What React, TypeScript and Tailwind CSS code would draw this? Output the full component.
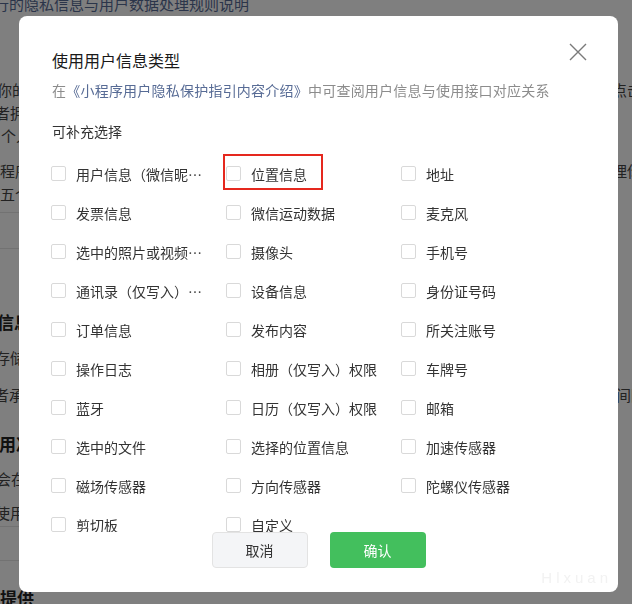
import { X } from "lucide-react";

const ITEMS: string[] = [
  "用户信息（微信昵称、头像）",
  "位置信息",
  "地址",
  "发票信息",
  "微信运动数据",
  "麦克风",
  "选中的照片或视频信息",
  "摄像头",
  "手机号",
  "通讯录（仅写入）权限",
  "设备信息",
  "身份证号码",
  "订单信息",
  "发布内容",
  "所关注账号",
  "操作日志",
  "相册（仅写入）权限",
  "车牌号",
  "蓝牙",
  "日历（仅写入）权限",
  "邮箱",
  "选中的文件",
  "选择的位置信息",
  "加速传感器",
  "磁场传感器",
  "方向传感器",
  "陀螺仪传感器",
  "剪切板",
  "自定义",
];

const font = "font-['Noto_Sans_CJK_SC','Noto_Sans',sans-serif]";

function BackgroundPage() {
  return (
    <div className={`h-screen w-full overflow-hidden bg-white text-[15px] text-[#444] ${font}`}>
      <div className="mt-[-7px] ml-[-6px] h-[22px] leading-[22px] text-[#576b95]">
        行的隐私信息与用户数据处理规则说明
      </div>
      <div className="mt-[64px] flex h-[22px] justify-between leading-[22px]">
        <span className="ml-[-3px] whitespace-nowrap">你的小程序如何处理用户信息</span>
        <span className="mr-[-10px] whitespace-nowrap">点击</span>
      </div>
      <div className="mt-[1px] ml-[-5px] h-[22px] whitespace-nowrap leading-[22px]">者拥有的个人信息</div>
      <div className="mt-[1px] ml-[1px] h-[22px] whitespace-nowrap leading-[22px]">个人信息保护说明</div>
      <div className="mt-[13px] flex h-[22px] justify-between leading-[22px]">
        <span className="whitespace-nowrap">程序开发者将处理</span>
        <span className="mr-[-10px] whitespace-nowrap">理你</span>
      </div>
      <div className="mt-[1px] h-[22px] whitespace-nowrap leading-[22px]">五个工作日内</div>
      <div className="mt-[7px] h-px w-[300px] bg-[#e5e5e5]" />
      <div className="mt-[35px] h-px w-[300px] bg-[#e5e5e5]" />
      <div className="mt-[61px] ml-[-3px] h-[24px] whitespace-nowrap text-[17px] font-bold leading-[24px] text-[#222]">
        信息的存储
      </div>
      <div className="mt-[13px] ml-[-5px] h-[22px] whitespace-nowrap leading-[22px]">存储地点</div>
      <div className="mt-[15px] flex h-[22px] justify-between leading-[22px]">
        <span className="ml-[-6px] whitespace-nowrap">者承诺存储期限</span>
        <span className="mr-[-14px] whitespace-nowrap">间隔</span>
      </div>
      <div className="mt-[26px] ml-[-1px] h-[24px] whitespace-nowrap text-[17px] font-bold leading-[24px] text-[#222]">
        用决定权
      </div>
      <div className="mt-[12px] ml-[-4px] h-[22px] whitespace-nowrap leading-[22px]">会在用户同意后</div>
      <div className="mt-[12px] ml-[-5px] h-[22px] whitespace-nowrap leading-[22px]">使用范围</div>
      <div className="mt-[2px] h-px w-[300px] bg-[#e5e5e5]" />
      <div className="mt-[33px] h-px w-[300px] bg-[#e5e5e5]" />
      <div className="mt-[25px] h-[24px] whitespace-nowrap text-[17px] font-bold leading-[24px] text-[#222]">
        提供
      </div>
    </div>
  );
}

function Item({ label, marked }: { label: string; marked?: boolean }) {
  return (
    <div className="relative flex items-center gap-[10px]">
      <span className="h-[15px] w-[15px] shrink-0 rounded-[2px] border border-[#d9d9d9] bg-white" />
      <span className="max-w-[128px] truncate text-[14px] leading-[20px] text-[#333]">{label}</span>
      {marked && (
        <span className="absolute left-[-3px] top-0 h-[36px] w-[100px] border-2 border-[#e5281e]" />
      )}
    </div>
  );
}

export default function App() {
  return (
    <div className="relative">
      <BackgroundPage />
      <div className={`fixed inset-0 bg-black/50 pl-[19px] pt-[16px] ${font}`}>
        <div className="relative flex h-[576px] w-[599px] flex-col rounded-lg bg-white">
          {/* Header */}
          <div className="flex items-start justify-between pl-[33px] pr-[31px] pt-[32px]">
            <h2 className="text-[16px] leading-[24px] text-[#1a1a1a]">使用用户信息类型</h2>
            <button className="mt-[-5px] text-[#7a7a7a]">
              <svg width="18" height="18" viewBox="0 0 18 18" fill="none" stroke="currentColor" strokeWidth="1.4">
                <path d="M1 1L17 17M17 1L1 17" />
              </svg>
            </button>
          </div>
          <p className="mt-[8px] pl-[33px] text-[14px] leading-[20px] tracking-[0.22px] text-[#8c8c8c]">
            在<span className="text-[#576b95]">《小程序用户隐私保护指引内容介绍》</span>中可查阅用户信息与使用接口对应关系
          </p>
          <p className="mt-[21px] pl-[33px] text-[14px] leading-[20px] text-[#333]">可补充选择</p>

          {/* Options */}
          <div className="mt-[13px] min-h-0 flex-1 overflow-hidden pl-[32px]">
            <div className="grid auto-rows-[39px] grid-cols-[175px_175px_175px]">
              {ITEMS.map((label) => (
                <Item key={label} label={label} marked={label === "位置信息"} />
              ))}
            </div>
          </div>

          {/* Footer */}
          <div className="flex justify-center gap-[22px] pb-[24px]">
            <button className="h-[36px] w-[96px] rounded-[4px] border border-[#e3e3e3] bg-[#f4f5f7] text-[14px] text-[#333]">
              取消
            </button>
            <button className="h-[36px] w-[96px] rounded-[4px] bg-[#43bf5d] text-[14px] text-white">
              确认
            </button>
          </div>

          <span className="absolute bottom-[6px] right-[6px] font-['Liberation_Sans',sans-serif] text-[15px] leading-[16px] tracking-[4px] text-[#f2f2f2]">
            Hlxuan
          </span>
        </div>
      </div>
    </div>
  );
}
